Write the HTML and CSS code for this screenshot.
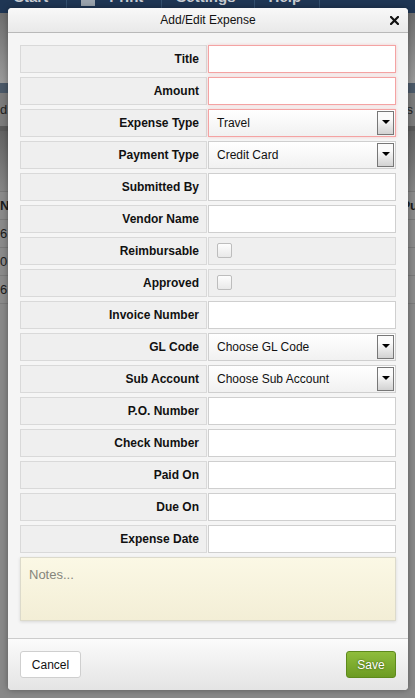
FILE: index.html
```html
<!DOCTYPE html>
<html>
<head>
<meta charset="utf-8">
<link rel="stylesheet" href="styles.css">
</head>
<body>
<div class="backdrop">
  <div class="toolbar">
    <span class="tb-item">Start</span><span class="tb-sep"></span>
    <span class="tb-icon"></span><span class="tb-item">Print</span><span class="tb-sep"></span>
    <span class="tb-item">Settings</span><span class="tb-sep"></span>
    <span class="tb-item">Help</span><span class="tb-sep"></span>
  </div>
  <div class="hdr"></div>
  <div class="subbar"></div>
  <div class="filter"><span>d:</span><span>s</span></div>
  <div class="fline"></div>
  <div class="band"></div>
  <div class="trow thead"><span>N</span><span>Pu</span></div>
  <div class="trow"><span>6</span><span></span></div>
  <div class="trow"><span>0</span><span></span></div>
  <div class="trow"><span>6</span><span></span></div>
</div>

<div class="modal">
  <div class="modal-header">
    <span class="modal-title">Add/Edit Expense</span>
    <svg class="modal-close" width="9" height="9" viewBox="0 0 9 9"><path d="M1 1 L8 8 M8 1 L1 8" stroke="#111" stroke-width="2.2" stroke-linecap="square"/></svg>
  </div>
  <div class="modal-body">
    <div class="row"><div class="label">Title</div><div class="field invalid"></div></div>
    <div class="row"><div class="label">Amount</div><div class="field invalid"></div></div>
    <div class="row"><div class="label">Expense Type</div><div class="field select invalid"><span>Travel</span><span class="arrow"></span></div></div>
    <div class="row"><div class="label">Payment Type</div><div class="field select"><span>Credit Card</span><span class="arrow"></span></div></div>
    <div class="row"><div class="label">Submitted By</div><div class="field"></div></div>
    <div class="row"><div class="label">Vendor Name</div><div class="field"></div></div>
    <div class="row"><div class="label">Reimbursable</div><div class="field check"><span class="box"></span></div></div>
    <div class="row"><div class="label">Approved</div><div class="field check"><span class="box"></span></div></div>
    <div class="row"><div class="label">Invoice Number</div><div class="field"></div></div>
    <div class="row"><div class="label">GL Code</div><div class="field select"><span>Choose GL Code</span><span class="arrow"></span></div></div>
    <div class="row"><div class="label">Sub Account</div><div class="field select"><span>Choose Sub Account</span><span class="arrow"></span></div></div>
    <div class="row"><div class="label">P.O. Number</div><div class="field"></div></div>
    <div class="row"><div class="label">Check Number</div><div class="field"></div></div>
    <div class="row"><div class="label">Paid On</div><div class="field"></div></div>
    <div class="row"><div class="label">Due On</div><div class="field"></div></div>
    <div class="row"><div class="label">Expense Date</div><div class="field"></div></div>
    <div class="notes">Notes...</div>
  </div>
  <div class="modal-footer">
    <span class="btn cancel">Cancel</span>
    <span class="btn save">Save</span>
  </div>
</div>
</body>
</html>
```
FILE: styles.css
```css
html, body {
  margin: 0;
  padding: 0;
}
body {
  background: #888888;
  font-family: "Liberation Sans", Arial, sans-serif;
  font-size: 12px;
  color: #000;
  width: 415px;
  height: 698px;
  overflow: hidden;
  position: relative;
}
.backdrop {
  width: 415px;
}
.toolbar {
  height: 13px;
  background: #1f3654;
  display: flex;
  align-items: flex-end;
  overflow: hidden;
  color: #c8ccd2;
  font-size: 15px;
  font-weight: bold;
}
.tb-item {
  line-height: 15px;
  margin-top: -10px;
  transform: translateY(-9px);
  padding: 0 18px 0 14px;
}
.tb-sep {
  width: 1px;
  height: 13px;
  background: #34506f;
}
.tb-icon {
  width: 14px;
  height: 6px;
  background: #9aa3ad;
  margin: 0 0 7px 14px;
}
.hdr {
  height: 70px;
  background: linear-gradient(#6e6e6e, #9a9a9a);
}
.subbar {
  height: 10px;
  background: #4b5968;
}
.filter {
  height: 33px;
  background: #7b7b7b;
  display: flex;
  justify-content: space-between;
  align-items: center;
  color: #222;
  font-size: 13px;
  padding-right: 2px;
}
.fline {
  height: 5px;
  background: #5a5a5a;
}
.band {
  height: 60px;
  background: linear-gradient(#636363, #858585);
  border-bottom: 1px solid #777;
}
.trow {
  height: 27px;
  border-bottom: 1px solid #7a7a7a;
  background: #8a8a8a;
  display: flex;
  justify-content: space-between;
  align-items: center;
  color: #1a1a1a;
  font-size: 13px;
}
.thead {
  font-weight: bold;
}
.trow span:last-child {
  margin-right: -3px;
}

.modal {
  position: absolute;
  left: 8px;
  top: 8px;
  width: 400px;
  height: 682px;
  background: #f5f5f5;
  border-radius: 4px;
  box-shadow: 0 0 6px rgba(0,0,0,0.35);
  display: flex;
  flex-direction: column;
  overflow: hidden;
}
.modal-header {
  height: 24px;
  flex: none;
  background: linear-gradient(#f8f8f8, #e9e9e9);
  border-bottom: 1px solid #b9b9b9;
  display: flex;
  align-items: center;
  justify-content: center;
  position: relative;
}
.modal-title {
  font-size: 12px;
  color: #111;
}
.modal-close {
  position: absolute;
  right: 9px;
  top: 8px;
}
.modal-body {
  flex: 1;
  padding: 12px 12px 0 12px;
  display: flex;
  flex-direction: column;
  gap: 4px;
}
.row {
  display: flex;
  height: 28px;
}
.label {
  width: 187px;
  box-sizing: border-box;
  background: #efefef;
  border: 1px solid #d9d9d9;
  font-weight: bold;
  text-align: right;
  padding-right: 7px;
  line-height: 26px;
  color: #111;
}
.field {
  width: 188px;
  margin-left: 1px;
  box-sizing: border-box;
  background: #fff;
  border: 1px solid #cfcfcf;
  display: flex;
  align-items: center;
  padding-left: 8px;
  color: #111;
}
.field.invalid {
  border-color: #f4a3a3;
  box-shadow: 0 0 3px rgba(240, 80, 80, 0.25);
}
.field.select {
  background: linear-gradient(#ffffff, #f1f1f1);
  justify-content: space-between;
  padding-right: 0;
}
.arrow {
  width: 15px;
  height: 22px;
  border: 1px solid #777;
  background: linear-gradient(#fbfbfb 30%, #d2d2d2);
  margin-right: 1px;
  position: relative;
  align-self: center;
}
.arrow::after {
  content: "";
  position: absolute;
  left: 4px;
  top: 8px;
  border-left: 4px solid transparent;
  border-right: 4px solid transparent;
  border-top: 4px solid #000;
}
.field.check {
  background: #efefef;
  border-color: #d9d9d9;
}
.box {
  width: 13px;
  height: 13px;
  border: 1px solid #bdbdbd;
  border-radius: 2px;
  background: linear-gradient(#fdfdfd, #e9e9e9);
  margin-top: -1px;
}
.notes {
  height: 64px;
  box-sizing: border-box;
  border: 1px solid #dcdacb;
  background: linear-gradient(#fbf8e5, #f3eed6);
  box-shadow: 0 1px 3px rgba(0,0,0,0.12);
  color: #85857c;
  padding: 9px 8px;
  font-size: 13px;
}
.modal-footer {
  flex: none;
  height: 52px;
  border-top: 1px solid #cccccc;
  background: linear-gradient(#fbfbfb, #e4e4e4);
  display: flex;
  align-items: flex-start;
  justify-content: space-between;
  padding: 12px 12px 0 12px;
  box-sizing: border-box;
}
.btn {
  height: 27px;
  box-sizing: border-box;
  border-radius: 3px;
  display: flex;
  align-items: center;
  justify-content: center;
  font-size: 12px;
}
.cancel {
  width: 61px;
  background: #fff;
  border: 1px solid #cfcfcf;
  color: #111;
}
.save {
  width: 50px;
  background: linear-gradient(#8fbd3c, #6c9b22);
  border: 1px solid #5e8a1c;
  color: #fff;
  text-shadow: 0 0 2px #2c4a08;
}
```
